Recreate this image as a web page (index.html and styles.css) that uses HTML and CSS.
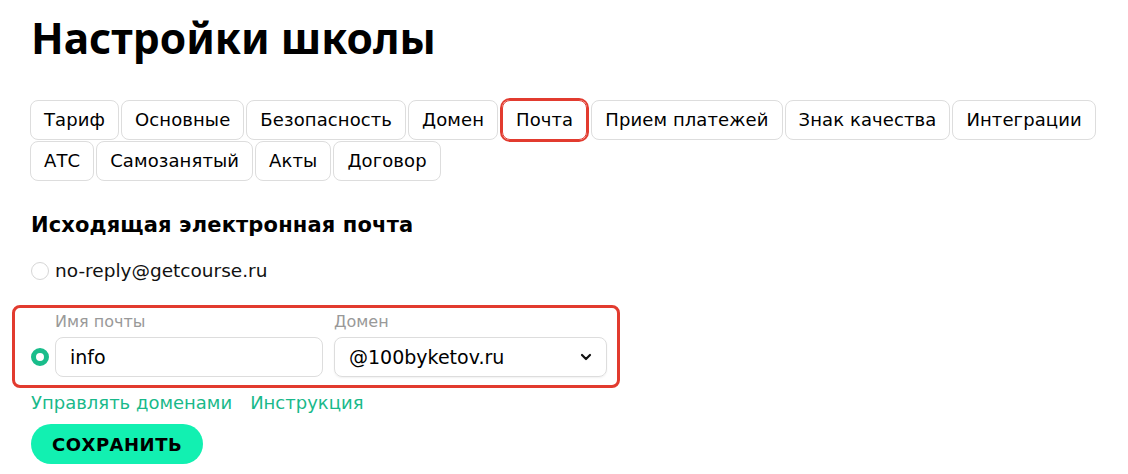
FILE: index.html
```html
<!DOCTYPE html>
<html lang="ru">
<head>
    <meta charset="UTF-8">
    <title>Настройки школы</title>
    <link rel="stylesheet" href="styles.css">
</head>
<body>
    <div class="page">
        <h1 class="title">Настройки школы</h1>

        <div class="tabs">
            <a class="tab">Тариф</a>
            <a class="tab">Основные</a>
            <a class="tab">Безопасность</a>
            <a class="tab">Домен</a>
            <a class="tab active">Почта</a>
            <a class="tab">Прием платежей</a>
            <a class="tab">Знак качества</a>
            <a class="tab">Интеграции</a>
            <a class="tab">АТС</a>
            <a class="tab">Самозанятый</a>
            <a class="tab">Акты</a>
            <a class="tab">Договор</a>
        </div>

        <h2 class="subtitle">Исходящая электронная почта</h2>

        <label class="option">
            <span class="radio"></span>
            <span>no-reply@getcourse.ru</span>
        </label>

        <div class="mark">
            <div class="custom">
                <span class="radio checked"></span>
                <div class="field name">
                    <div class="field-label">Имя почты</div>
                    <div class="input">info</div>
                </div>
                <div class="field domain">
                    <div class="field-label">Домен</div>
                    <div class="input select">
                        <span>@100byketov.ru</span>
                        <svg width="12" height="8" viewBox="0 0 12 8"><path d="M2 2l4 4 4-4" fill="none" stroke="#111" stroke-width="2.2" stroke-linecap="round" stroke-linejoin="round"/></svg>
                    </div>
                </div>
            </div>
        </div>

        <div class="links">
            <a>Управлять доменами</a>
            <a>Инструкция</a>
        </div>

        <button type="button" class="save">Сохранить</button>
    </div>
</body>
</html>
```

FILE: styles.css
```css
html,body{
    margin: 0;
    padding: 0;
    background-color: #fff;
    font-family: "DejaVu Sans", "Noto Sans", sans-serif;
    color: #111;
}
.page{
    padding: 8px 0 0 31px;
}
.title{
    margin: 0;
    font-family: "Noto Sans", "DejaVu Sans", sans-serif;
    font-size: 42.5px;
    line-height: 60px;
    font-weight: 700;
    color: #000;
}
.tabs{
    display: flex;
    flex-wrap: wrap;
    gap: 1px 2px;
    width: 1080px;
    margin-top: 32px;
    margin-left: -1px;
}
.tab{
    height: 38px;
    line-height: 38px;
    padding: 0 13px;
    border: 1px solid #ddd;
    border-radius: 8px;
    font-size: 18px;
    letter-spacing: 0.1px;
    color: #000;
}
.tab.active{
    border-color: #e23b2f;
    box-shadow: 0 0 0 2px #e23b2f;
    margin: 0 2px;
}
.subtitle{
    margin: 29px 0 0;
    font-size: 21px;
    line-height: 30px;
    font-weight: 700;
    letter-spacing: 0.15px;
    color: #000;
}
.option{
    display: flex;
    align-items: center;
    gap: 6px;
    margin-top: 19px;
    font-size: 18.5px;
    line-height: 24px;
}
.radio{
    width: 16px;
    height: 16px;
    border: 1px solid #d6d6d6;
    border-radius: 50%;
    flex: none;
}
.radio.checked{
    width: 8px;
    height: 8px;
    border: 5px solid #19bd8b;
    background: #fff;
    margin-top: 25px;
}
.mark{
    box-sizing: border-box;
    margin: 22px 0 0 -19px;
    width: 608px;
    border: 3px solid #e23b2f;
    border-radius: 8px;
    padding: 4px 0 8px 16px;
}
.custom{
    display: flex;
    align-items: center;
    gap: 6px;
}
.field-label{
    font-size: 16px;
    line-height: 20px;
    color: #999;
    margin-bottom: 5px;
}
.name{
    width: 268px;
}
.domain{
    width: 273px;
    margin-left: 5px;
}
.input{
    height: 38px;
    line-height: 38px;
    border: 1px solid #ddd;
    border-radius: 8px;
    padding: 0 14px;
    font-size: 19px;
    color: #000;
}
.select{
    display: flex;
    align-items: center;
    justify-content: space-between;
    box-shadow: 0 1px 2px rgba(0,0,0,0.06);
}
.links{
    display: flex;
    gap: 18px;
    margin-top: 3px;
    font-size: 18px;
    line-height: 24px;
    color: #19b98a;
}
.save{
    margin-top: 9px;
    height: 40px;
    padding: 0 21px;
    border: none;
    border-radius: 20px;
    background-color: #12f0b1;
    font-family: inherit;
    font-size: 18px;
    font-weight: 700;
    letter-spacing: 0.5px;
    text-transform: uppercase;
    color: #000;
    cursor: pointer;
}
```
